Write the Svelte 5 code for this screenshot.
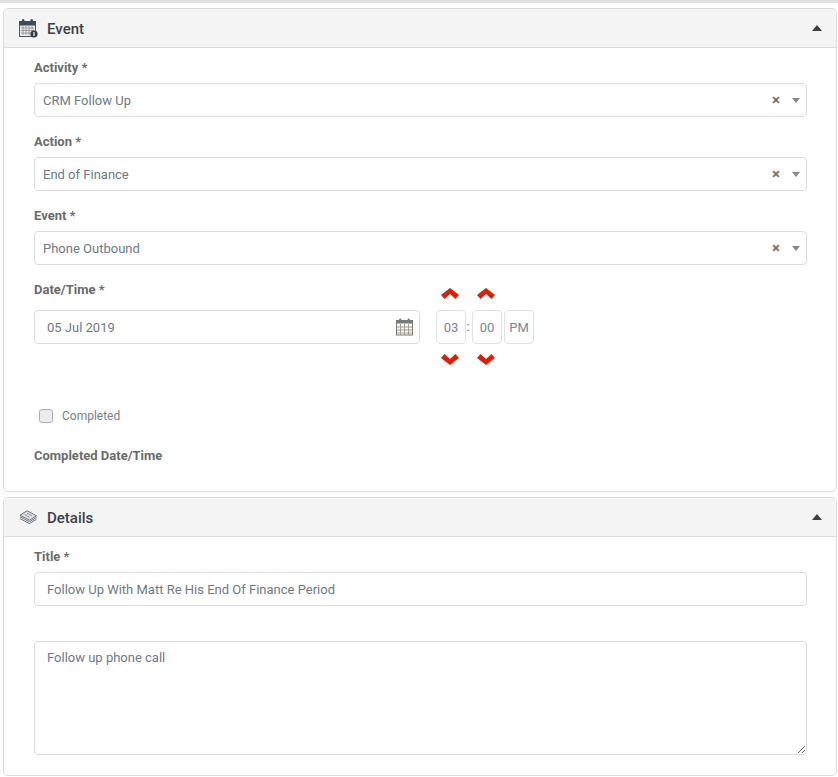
<script>
    const selects = [
        { label: 'Activity *', value: 'CRM Follow Up' },
        { label: 'Action *', value: 'End of Finance' },
        { label: 'Event *', value: 'Phone Outbound' }
    ];
</script>

{#snippet chevUp()}
    <svg class="chev" width="18" height="11" viewBox="0 0 18 11"><path d="M9 0l9 7-3.5 4-5.5-5-5.5 5-3.5-4z" /></svg>
{/snippet}

{#snippet chevDown()}
    <svg class="chev" width="18" height="11" viewBox="0 0 18 11"><path d="M9 11l9-7-3.5-4-5.5 5-5.5-5-3.5 4z" /></svg>
{/snippet}

<div class="page">
    <section class="panel event-panel">
        <header class="panel-head">
            <svg class="head-icon" width="19" height="19" viewBox="0 0 19 19">
                <rect x="0.5" y="2.5" width="16" height="15" fill="#e9ebec" stroke="#4a5660" />
                <rect x="0.5" y="2.5" width="16" height="4" fill="#3f4c57" />
                <path d="M2 9h13M2 11.5h13M2 14h13M4 7v9M7 7v9M10 7v9M13 7v9" stroke="#8a8f94" stroke-width="0.8" />
                <rect x="3" y="0" width="2.4" height="4.5" rx="1.2" fill="#3f4c57" />
                <rect x="11.5" y="0" width="2.4" height="4.5" rx="1.2" fill="#3f4c57" />
                <circle cx="15" cy="15" r="3.6" fill="#2f3d48" />
                <path d="M15 13v4" stroke="#fff" stroke-width="1.2" />
            </svg>
            <h2>Event</h2>
            <span class="collapse"></span>
        </header>
        <div class="panel-body">
            {#each selects as s}
                <div class="field">
                    <div class="label">{s.label}</div>
                    <div class="select">
                        <span class="value">{s.value}</span>
                        <span class="clear">×</span>
                        <span class="caret"></span>
                    </div>
                </div>
            {/each}

            <div class="datetime">
                <div class="date-col">
                    <div class="label">Date/Time *</div>
                    <div class="date-input">
                        <span>05 Jul 2019</span>
                        <svg width="18" height="18" viewBox="0 0 18 18">
                            <rect x="0.5" y="2.5" width="16" height="14.5" fill="#fbf8f2" stroke="#7a7a78" />
                            <rect x="0.5" y="2.5" width="16" height="3" fill="#7a7a78" />
                            <path d="M1 9h15M1 12h15M1 15h15M4.5 6v11M8.5 6v11M12.5 6v11" stroke="#9a958b" stroke-width="0.9" />
                            <rect x="3.2" y="0.5" width="2.2" height="4" rx="1.1" fill="#7a7a78" />
                            <rect x="11.6" y="0.5" width="2.2" height="4" rx="1.1" fill="#7a7a78" />
                        </svg>
                    </div>
                </div>
                <div class="time">
                    <div class="spin">
                        {@render chevUp()}
                        <div class="time-box">03</div>
                        {@render chevDown()}
                    </div>
                    <span class="colon">:</span>
                    <div class="spin">
                        {@render chevUp()}
                        <div class="time-box">00</div>
                        {@render chevDown()}
                    </div>
                    <div class="time-box ampm">PM</div>
                </div>
            </div>

            <label class="check">
                <span class="box"></span>
                <span>Completed</span>
            </label>

            <div class="label completed-label">Completed Date/Time</div>
        </div>
    </section>

    <section class="panel details-panel">
        <header class="panel-head">
            <svg class="head-icon" width="19" height="14" viewBox="0 0 19 14">
                <path d="M8 0.8l9.5 5-7 4.4-9.5-5z" fill="#dfe2e4" stroke="#5d6871" stroke-width="0.9" />
                <path d="M1 6.8l9.5 5 7-4.4M1 8.6l9.5 5 7-4.4" fill="none" stroke="#5d6871" stroke-width="0.9" />
                <path d="M5.5 4.6l5 2.7M8 3.2l5 2.7" stroke="#7d868d" stroke-width="0.8" />
            </svg>
            <h2>Details</h2>
            <span class="collapse"></span>
        </header>
        <div class="panel-body">
            <div class="label">Title *</div>
            <div class="title-input">Follow Up With Matt Re His End Of Finance Period</div>
            <textarea class="notes">Follow up phone call</textarea>
        </div>
    </section>
</div>

<style>
    :global(body) {
        margin: 0;
        background: #fff;
        font-family: Roboto, "Liberation Sans", sans-serif;
    }

    .page {
        border-top: 3px solid #e0e0e0;
        padding: 5px 0 0 3px;
        box-sizing: border-box;
        width: 838px;
        height: 777px;
        overflow: hidden;
    }

    .panel {
        border: 1px solid #dcdcdc;
        border-radius: 5px;
        box-sizing: border-box;
        width: 834px;
        overflow: hidden;
    }

    .event-panel {
        height: 484px;
        margin-bottom: 5px;
    }

    .details-panel {
        height: 279px;
    }

    .panel-head {
        display: flex;
        align-items: center;
        height: 39px;
        box-sizing: border-box;
        background: #f4f4f4;
        border-bottom: 1px solid #dcdcdc;
        padding: 0 14px 0 15px;
    }

    .head-icon {
        margin-right: 9px;
    }

    h2 {
        margin: 0;
        padding-top: 2px;
        flex: 1;
        font-size: 15px;
        font-weight: 500;
        color: #3b4249;
    }

    .collapse {
        width: 0;
        height: 0;
        border-left: 5px solid transparent;
        border-right: 5px solid transparent;
        border-bottom: 6px solid #3b3f44;
    }

    .panel-body {
        padding: 0 29px 0 30px;
    }

    .label {
        font-size: 13px;
        font-weight: 700;
        color: #6b6b6b;
        line-height: 16px;
    }

    .field {
        padding-top: 12px;
        margin-bottom: -1px;
    }

    .field + .field {
        padding-top: 18px;
    }

    .select {
        display: flex;
        align-items: center;
        margin-top: 7px;
        height: 34px;
        box-sizing: border-box;
        border: 1px solid #dcdcdc;
        border-radius: 4px;
        padding: 0 6px 0 8px;
        font-size: 13px;
        color: #6f7a85;
    }

    .value {
        flex: 1;
    }

    .clear {
        font-size: 15px;
        font-weight: 700;
        color: #7a6f66;
        margin-right: 12px;
    }

    .caret {
        width: 0;
        height: 0;
        border-left: 4px solid transparent;
        border-right: 4px solid transparent;
        border-top: 5px solid #888;
    }

    .datetime {
        display: flex;
        padding-top: 18px;
    }

    .date-col {
        width: 386px;
    }

    .date-input {
        display: flex;
        align-items: center;
        justify-content: space-between;
        margin-top: 12px;
        height: 34px;
        box-sizing: border-box;
        border: 1px solid #dcdcdc;
        border-radius: 4px;
        padding: 0 5px 0 12px;
        font-size: 13px;
        color: #6f7a85;
    }

    .time {
        display: flex;
        align-items: flex-start;
        margin-left: 16px;
        padding-top: 6px;
    }

    .spin {
        display: flex;
        flex-direction: column;
        align-items: center;
        gap: 10px;
    }

    .chev {
        margin-right: 2px;
    }

    .spin .chev:first-child {
        margin-bottom: 1px;
    }

    .chev path {
        fill: #d9200c;
    }

    .time-box {
        width: 30px;
        height: 34px;
        box-sizing: border-box;
        border: 1px solid #e2e2e2;
        border-radius: 4px;
        display: flex;
        align-items: center;
        justify-content: center;
        font-size: 13px;
        color: #7b8590;
    }

    .colon {
        width: 6px;
        box-sizing: border-box;
        padding-right: 2px;
        margin-top: 22px;
        line-height: 34px;
        text-align: center;
        font-size: 13px;
        color: #777;
    }

    .ampm {
        margin-left: 2px;
        margin-top: 22px;
    }

    .check {
        display: flex;
        align-items: center;
        gap: 9px;
        margin: 44px 0 0 5px;
        font-size: 12px;
        color: #7a7f85;
    }

    .box {
        width: 14px;
        height: 14px;
        box-sizing: border-box;
        background: #ececec;
        border: 1px solid #b0b0b0;
        border-radius: 3px;
    }

    .completed-label {
        margin-top: 25px;
    }

    .details-panel .label {
        margin-top: 12px;
    }

    .title-input {
        display: flex;
        align-items: center;
        margin-top: 7px;
        height: 34px;
        box-sizing: border-box;
        border: 1px solid #dcdcdc;
        border-radius: 4px;
        padding: 0 12px;
        font-size: 13px;
        color: #6f7a85;
    }

    .notes {
        display: block;
        width: 100%;
        height: 114px;
        margin-top: 35px;
        box-sizing: border-box;
        border: 1px solid #dcdcdc;
        border-radius: 4px;
        padding: 8px 12px;
        font-family: inherit;
        font-size: 13px;
        color: #6f7a85;
        outline: none;
    }
</style>
